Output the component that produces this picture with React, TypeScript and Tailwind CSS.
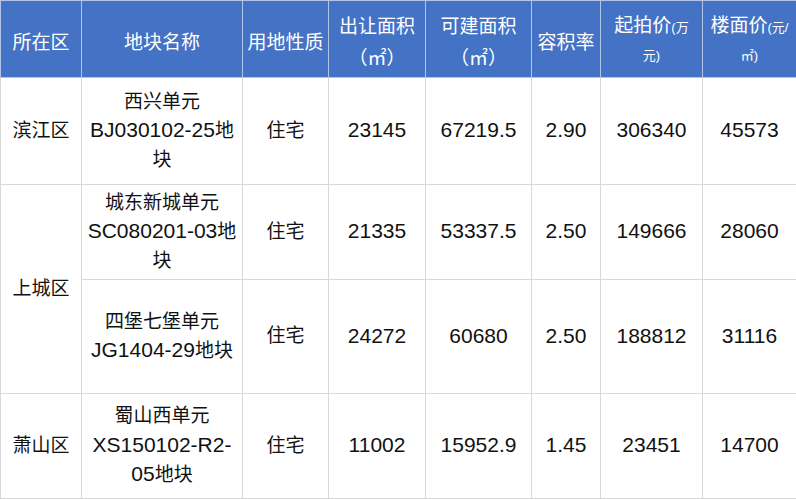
import React from "react";

const font = { fontFamily: '"Liberation Sans", "Noto Sans CJK SC", sans-serif' };

const th = "bg-[#4472c4] text-white font-normal text-[19px] leading-[32px] text-center align-middle border border-[#b3c6ea] px-1 pt-[7px]";
const td = "text-[#111111] text-[19px] leading-[28.5px] text-center align-middle border border-[#d8d8d8] px-1";

function L({ children }: { children: React.ReactNode }) {
  return <span className="text-[21px]">{children}</span>;
}

export default function App() {
  return (
    <div className="w-[796px] h-[500px] bg-white" style={font}>
      <table className="table-fixed border-collapse w-[796px]">
        <colgroup>
          <col className="w-[81px]" />
          <col className="w-[161px]" />
          <col className="w-[86px]" />
          <col className="w-[97px]" />
          <col className="w-[106px]" />
          <col className="w-[69px]" />
          <col className="w-[102px]" />
          <col className="w-[94px]" />
        </colgroup>
        <thead>
          <tr className="h-[77px]">
            <th className={th}>所在区</th>
            <th className={th}>地块名称</th>
            <th className={th}>用地性质</th>
            <th className={th}>
              <div>出让面积</div>
              <div>（㎡）</div>
            </th>
            <th className={th}>
              <div>可建面积</div>
              <div>（㎡）</div>
            </th>
            <th className={th}>容积率</th>
            <th className={th}>
              <div>
                起拍价<span className="text-[13px]">(万</span>
              </div>
              <div className="text-[13px] leading-[24px] pb-[8px]">元)</div>
            </th>
            <th className={th}>
              <div>
                楼面价<span className="text-[13px]">(元/</span>
              </div>
              <div className="text-[13px] leading-[24px] pb-[8px]">㎡)</div>
            </th>
          </tr>
        </thead>
        <tbody>
          <tr className="h-[107px]">
            <td className={td}>滨江区</td>
            <td className={td}>西兴单元<br /><L>BJ030102-25</L>地<br />块</td>
            <td className={td}>住宅</td>
            <td className={td}><L>23145</L></td>
            <td className={td}><L>67219.5</L></td>
            <td className={td}><L>2.90</L></td>
            <td className={td}><L>306340</L></td>
            <td className={td}><L>45573</L></td>
          </tr>
          <tr className="h-[95px]">
            <td className={td} rowSpan={2}>上城区</td>
            <td className={td}>城东新城单元<br /><L>SC080201-03</L>地<br />块</td>
            <td className={td}>住宅</td>
            <td className={td}><L>21335</L></td>
            <td className={td}><L>53337.5</L></td>
            <td className={td}><L>2.50</L></td>
            <td className={td}><L>149666</L></td>
            <td className={td}><L>28060</L></td>
          </tr>
          <tr className="h-[114px]">
            <td className={td}>四堡七堡单元<br /><L>JG1404-29</L>地块</td>
            <td className={td}>住宅</td>
            <td className={td}><L>24272</L></td>
            <td className={td}><L>60680</L></td>
            <td className={td}><L>2.50</L></td>
            <td className={td}><L>188812</L></td>
            <td className={td}><L>31116</L></td>
          </tr>
          <tr className="h-[105px]">
            <td className={td}>萧山区</td>
            <td className={td}>蜀山西单元<br /><L>XS150102-R2-</L><br /><L>05</L>地块</td>
            <td className={td}>住宅</td>
            <td className={td}><L>11002</L></td>
            <td className={td}><L>15952.9</L></td>
            <td className={td}><L>1.45</L></td>
            <td className={td}><L>23451</L></td>
            <td className={td}><L>14700</L></td>
          </tr>
        </tbody>
      </table>
    </div>
  );
}
